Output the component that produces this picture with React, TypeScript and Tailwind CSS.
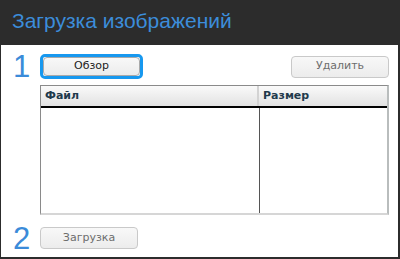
import React from 'react'

const verdana = { fontFamily: '"DejaVu Sans", Verdana, sans-serif' }

function Num({ n }: { n: string }) {
  return (
    <span
      className="w-[27px] text-[31px] leading-none font-light text-[#3b8bd9]"
      style={{ fontFamily: '"Liberation Sans", Arial, sans-serif' }}
    >
      {n}
    </span>
  )
}

function Button({ label, disabled, focused, w }: { label: string; disabled?: boolean; focused?: boolean; w: string }) {
  const btn = (
    <button
      className={[
        'flex items-center justify-center rounded-[4px] border text-[11px] bg-gradient-to-b from-[#f8f8f8] to-[#ececec]',
        disabled ? 'border-[#c9c9c9] text-[#6d6d6d]' : 'border-[#a9a9a9] text-[#1c1c1c]',
        focused ? 'w-full h-full' : `${w} h-[22px]`
      ].join(' ')}
      style={verdana}
    >
      {label}
    </button>
  )
  if (!focused) return btn
  return (
    <span className={`${w} h-[25px] rounded-[5px] border-[3px] border-[#1798ef] flex`}>
      {btn}
    </span>
  )
}

export default function App() {
  return (
    <div className="w-[400px] h-[259px] bg-[#2c2c2c] flex flex-col" style={{ fontFamily: '"Liberation Sans", Arial, sans-serif' }}>
      {/* Title bar */}
      <div className="h-[45px] flex items-center pl-[12px] pb-[4px]">
        <h1 className="text-[21px] text-[#3c8dda]">Загрузка изображений</h1>
      </div>

      {/* Body */}
      <div className="flex-1 ml-[1px] mr-[2px] mb-[2px] bg-white flex flex-col pt-[9px] pl-[12px] pr-[9px]">
        {/* Step 1 */}
        <div className="flex items-center h-[25px]">
          <Num n="1" />
          <Button label="Обзор" focused w="w-[103px]" />
          <div className="ml-auto">
            <Button label="Удалить" disabled w="w-[98px]" />
          </div>
        </div>

        {/* File table */}
        <div className="ml-[27px] mt-[6px] h-[130px] flex flex-col border-t border-l border-[#8a8a8a] border-r-2 border-r-[#b9bdbd] border-b-2 border-b-[#d6d6d6]">
          <div className="h-[22px] flex bg-gradient-to-b from-[#fafafa] to-[#e2e2e2] border-b-2 border-black text-[11px] font-bold text-[#1f3a4c]" style={verdana}>
            <div className="w-[218px] flex items-center pl-[4px] border-r-2 border-[#d3d3d3]">Файл</div>
            <div className="flex-1 flex items-center pl-[4px]">Размер</div>
          </div>
          <div className="flex-1 flex">
            <div className="w-[219px] border-r border-[#555]" />
            <div className="flex-1" />
          </div>
        </div>

        {/* Step 2 */}
        <div className="flex items-center h-[22px] mt-[12px]">
          <Num n="2" />
          <Button label="Загрузка" disabled w="w-[98px]" />
        </div>
      </div>
    </div>
  )
}
